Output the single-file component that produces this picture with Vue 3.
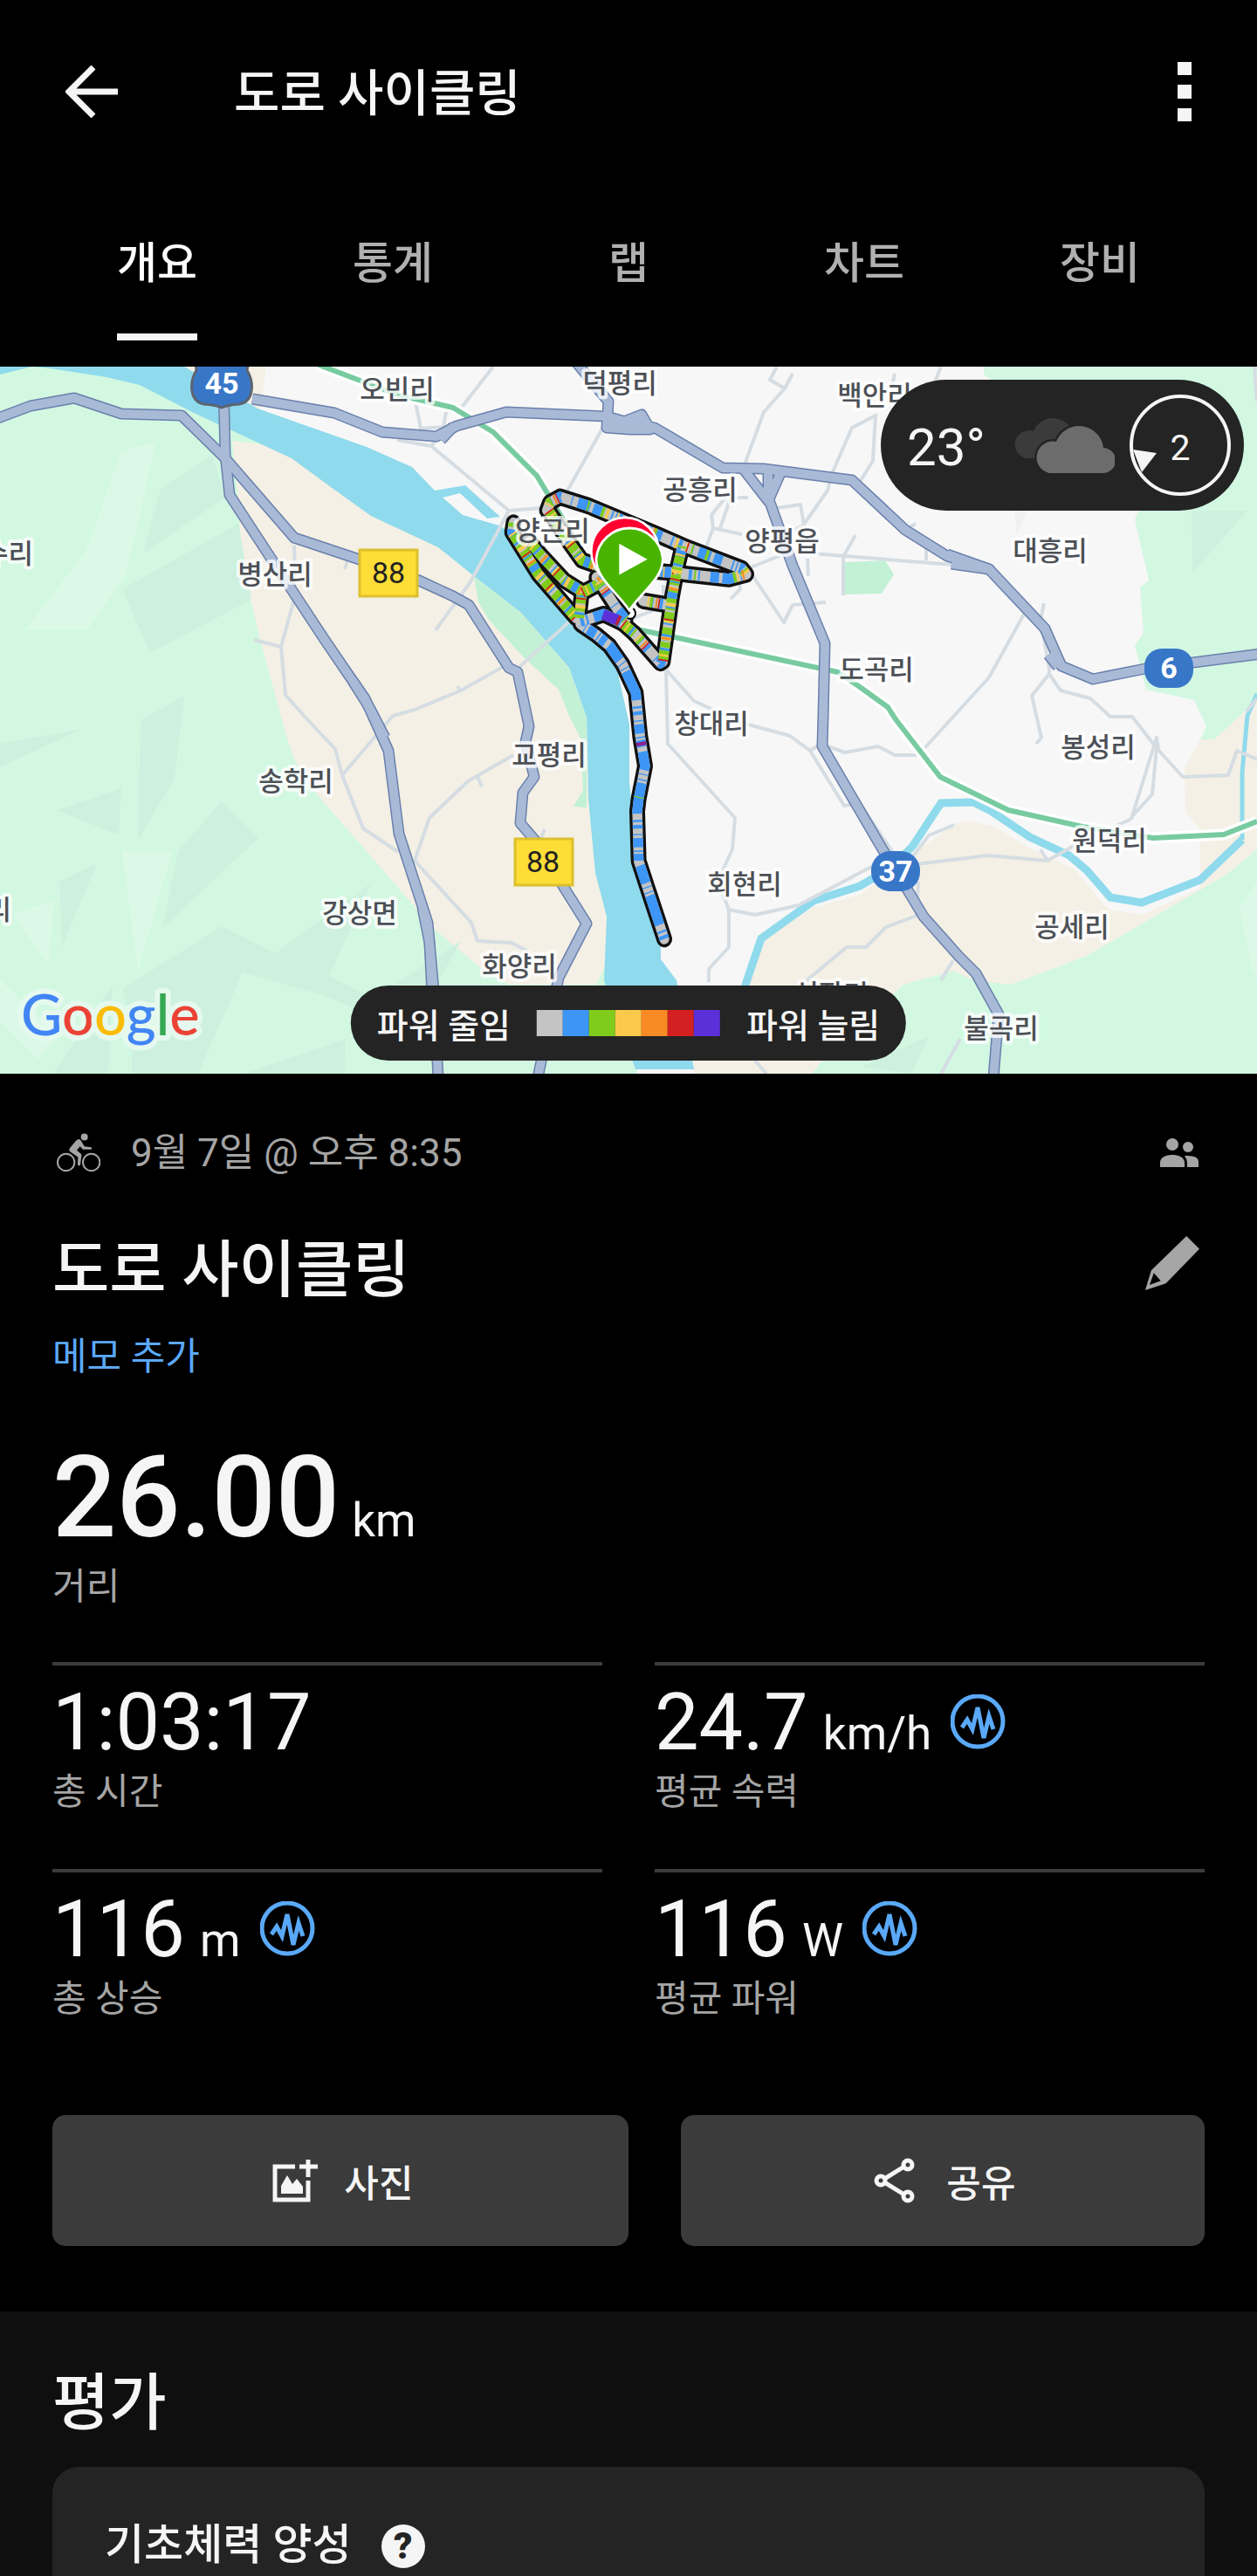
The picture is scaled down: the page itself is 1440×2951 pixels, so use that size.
<template>
  <div class="page">
    <header class="toolbar">
      <button class="icon-btn" type="button" aria-label="뒤로">
        <svg class="back-icon" viewBox="0 0 60 60">
          <path d="M32 2 4 30l28 28M6 30h54" />
        </svg>
      </button>
      <h1 class="toolbar-title">도로 사이클링</h1>
      <button class="icon-btn" type="button" aria-label="더보기">
        <svg class="more-icon" viewBox="0 0 16 68">
          <path d="M0 0h16v15H0zM0 26h16v16H0zM0 53h16v15H0z" />
        </svg>
      </button>
    </header>

    <nav class="tabs">
      <button
        class="tab"
        :class="activeTab === tab ? 'active' : ''"
        type="button"
        v-for="tab in tabs"
        :key="tab"
        @click="activeTab = tab"
      >
        <span class="tab-label">{{ tab }}</span>
      </button>
    </nav>

    <div class="map">
      <svg class="map-canvas" viewBox="0 0 1440 810">
        <rect class="land" width="1440" height="810" />

        <!-- Terrain -->
        <path class="wood" d="M0 0h213L300 80 700 400l30 410H0z" />
        <path class="wood" d="M1126 0l2 10 60 40 117 115-5 10 16 70-10 8 4 52-10 15 13 50 55 12 14 30-7 15 16 2 21-21 16-15 12-8V0z" />
        <path
          class="sand"
          d="M213 0h92l-7 50zM266 85l6 55 3 50 12 77 13 53 27 100 10 30 26 40 135 155 54 45 31 18h100l20-41-3-82-20-80V400L570 230 400 100z"
        />
        <path
          class="sand"
          d="M1375 427h16l37-34 12-8v168l-35 29-160 93-87 33-43-5-23-11-57 16-93 87-12 15H795l-5-15 65-87 20-50 55-38 55-15 50-40 60-42 15-3 30 7 40 25 50 23 40 47 40 6 65-31V530l-17-19-1-51z"
        />
        <path class="wood" d="m1440 553-35 29-160 93-87 33-43-5-23-11-57 16-93 87-12 15h510z" />
        <path class="facet-light" d="M139 97l40-11-35 154-44 61H30l69-91zM140 555h57l-39 138zM14 627l47-15-5 74zM0 703l69 64-25 26-44-43zM1440 590l-20 30 14 70 6 10z" />
        <path
          class="facet-dark"
          d="M243 102l15 48-93 63 19-73zM273 180l15 87-116 61-32-73zM211 377l-50 28-3 138 42-71zM0 432l94-17L0 459zM65 508l74-25-3 54zM204 555l50-57 42 42-110 104zM68 590l43-21-40 96zM140 713l114-72 61 31 110-80-48 106 43 22 20 30-70-30-92-26-51 116h-76l-1-65zM280 810l116-40-1 40zM452 708l76-50-28 50zM61 810l68-102-5 102zM1365 165h64l-63 71zM987 802l77-35-20 43z"
        />
        <path class="facet-grey" d="M1162 165h14l-11 28z" />

        <!-- River -->
        <path
          class="water"
          d="M0 0h211l84 48 125 44 52 23 26 27 35-6 40 36-15 2-31-29-20 5 23 20 45 13 15 17 60 70 55 68 16 72v65l6 65 26 105 4 17v17l18 24 20 102h-67l-36-102 3-73-13-50-8-85-2-98V402l-20-57-55-63-54-42-41-33-77-36-46-33-45-33-114-53-60-31-38-9-65-10-20-2-50 12L0 62z"
        />
        <path class="park" d="M543 240l54 42 55 63 20 57v103l-15-1 11-19-3-60-13-25-12-30-40-37-40-43-12-20zM968 224l46-2 10 16-14 22-42 1z" />
        <path class="creek" d="M850 720l22-65 60-43 53-17 35-20 25-25 33-50 37-1 20 10 45 30 45 21 20 17 27 31 36 6 67-26 48-46" />
        <path class="creek thin" d="M1423 542v-77l6-65 11-25" />

        <!-- Roads -->
        <path class="street" v-for="d in streets" :key="d" :d="d" />
        <path class="rail-casing" :d="rail" />
        <path class="rail" :d="rail" />
        <path class="road-casing" v-for="d in roads" :key="'c' + d" :d="d" />
        <path class="road" v-for="d in roads" :key="'f' + d" :d="d" />

        <!-- Place names under the track -->
        <text
          class="place"
          :class="place.anchor"
          v-for="place in places"
          :key="place.name + place.y"
          :x="place.x"
          :y="place.y"
        >
          {{ place.name }}
        </text>

        <!-- Ride coloured by power -->
        <g transform="translate(540 120) scale(0.3333 0.3571)">
          <path class="track-casing" v-for="t in tracks" :key="'c' + t.d" :d="t.d" />
          <path class="track base" v-for="t in tracks" :key="'b' + t.d" :d="t.d" />
          <template v-for="t in tracks" :key="'l' + t.d">
            <path
              class="track"
              v-for="layer in bands[t.kind]"
              :key="layer.color"
              :d="t.d"
              :stroke-dasharray="layer.dash"
              :style="{ stroke: layer.color }"
            />
          </template>
          <path class="track" d="M452 459l50 18" style="stroke: #5b30d8" />
          <path class="track" d="M500 476l10 5" style="stroke: #b3263c" />
          <path class="track" d="M585 880l-2-12" style="stroke: #8b2390" />
          <path class="start-dot" d="M556 440a18 18 0 1 1-20 30" />
          <path class="pin end" d="M527 420C470 354 412 320 412 256a116 108 0 0 1 232 0c0 58-60 98-117 164z" />
          <path class="pin start" d="M543 446C500 385 429 345 429 280a115 108 0 0 1 229 0c0 65-72 105-115 166z" />
          <path class="pin-play" d="M508 232v100l97-50z" />
        </g>
        <text class="place" x="633" y="199">양근리</text>

        <!-- Road shields -->
        <path class="shield us" d="M224-6h61l-2 10q7 12 5 24-2 13-14 15-14 1-20 4-6-3-20-4-12-2-14-15-2-12 5-24z" />
        <text class="shield-text" x="254" y="31">45</text>
        <rect class="shield local" x="412" y="210" width="66" height="53" />
        <text class="shield-text dark" x="445" y="248">88</text>
        <rect class="shield local" x="590" y="541" width="66" height="53" />
        <text class="shield-text dark" x="622" y="579">88</text>
        <rect class="shield national" x="998" y="555" width="56" height="46" rx="22" />
        <text class="shield-text" x="1026" y="590">37</text>
        <rect class="shield national" x="1311" y="323" width="56" height="45" rx="20" />
        <text class="shield-text" x="1339" y="357">6</text>

        <text class="google" x="24" y="766">
          <tspan class="g-blue">G</tspan><tspan class="g-red">o</tspan><tspan class="g-yellow">o</tspan><tspan class="g-blue">g</tspan><tspan class="g-green">l</tspan><tspan class="g-red">e</tspan>
        </text>
      </svg>

      <div class="weather">
        <span class="temperature">23°</span>
        <svg class="clouds" viewBox="0 0 116 64">
          <path class="cloud-back" d="M16 47a16 16 0 1 1 7-31 24 24 0 0 1 44-1v32z" />
          <path
            class="cloud-front"
            d="M41 64a18 18 0 1 1 8-36 28 28 0 0 1 54 7 14 14 0 0 1-1 29z"
          />
        </svg>
        <svg class="wind" viewBox="0 0 116 116">
          <circle cx="58" cy="58" r="56" />
          <path d="M4 63l27 4-17 22z" />
          <text x="58" y="75">2</text>
        </svg>
      </div>

      <div class="legend">
        <span>파워 줄임</span>
        <div class="swatches">
          <i
            class="swatch"
            v-for="color in powerColors"
            :key="color"
            :style="{ background: color }"
          ></i>
        </div>
        <span>파워 늘림</span>
      </div>
    </div>

    <main class="summary">
      <div class="meta">
        <svg class="bike-icon" viewBox="45 51 150 134">
          <g class="wheels">
            <circle cx="77" cy="151" r="29" />
            <circle cx="164" cy="151" r="29" />
          </g>
          <circle cx="140" cy="64" r="12" />
          <path d="M118 72q6-2 10 4l12 20 22 3q4 1 4 4 0 4-4 4h-27l-10-11-11 14 14 12q3 3 2 7l-4 30q-1 4-5 4-4-1-4-5l1-25-26-18q-7-6-2-13l22-26z" />
        </svg>
        <span class="date">9월 7일 @ 오후 8:35</span>
        <svg class="people-icon" viewBox="0 0 44 33">
          <circle cx="14" cy="7" r="7" />
          <circle cx="32" cy="10" r="6" />
          <path d="M0 33v-5c0-7 8-9 14-9s14 2 14 9v5zM31 33v-5q0-4-3-8 16-1 16 7v6z" />
        </svg>
      </div>

      <div class="title-row">
        <h2 class="title">도로 사이클링</h2>
        <button class="icon-btn edit" type="button" aria-label="이름 편집">
          <svg class="pencil-icon" viewBox="0 0 63 63">
            <path d="M48 0l15 15-39 40-24 8 7-23zM10 43l-5 14 13-5z" fill-rule="evenodd" />
          </svg>
        </button>
      </div>
      <a class="note-link" href="#">메모 추가</a>

      <div class="distance">
        <p class="distance-value">26.00 <span class="unit">km</span></p>
        <p class="label">거리</p>
      </div>

      <div class="stats">
        <div class="stat" v-for="stat in stats" :key="stat.label">
          <p class="stat-value">
            {{ stat.value }} <span class="unit" v-if="stat.unit">{{ stat.unit }}</span>
            <svg class="pulse-icon" viewBox="0 0 63 63" v-if="stat.chart">
              <circle cx="31" cy="31" r="29" />
              <path d="M13 38l6-9 6 11 6-25 7 35 6-25 5 15" />
            </svg>
          </p>
          <p class="label">{{ stat.label }}</p>
        </div>
      </div>

      <div class="actions">
        <button class="action photo" type="button">
          <svg class="action-icon" viewBox="0 0 54 54">
            <path class="line" d="M28 11H5v38h38V27" />
            <path class="line" d="M43 3v20M33 11h21" />
            <path d="M12 42v-9l7-12 6 10 5-6 7 9v8z" />
          </svg>
          사진
        </button>
        <button class="action share" type="button">
          <svg class="action-icon" viewBox="0 0 54 54">
            <path class="line" d="M39 9 10 27l29 18" />
            <circle class="node" cx="40" cy="9" r="5" />
            <circle class="node" cx="9" cy="27" r="5" />
            <circle class="node" cx="40" cy="45" r="5" />
          </svg>
          공유
        </button>
      </div>
    </main>

    <section class="evaluation">
      <h2 class="section-title">평가</h2>
      <div class="card">
        <h3 class="card-title">기초체력 양성</h3>
        <button class="icon-btn help" type="button" aria-label="도움말">?</button>
      </div>
    </section>
  </div>
</template>

<script setup>
import { ref } from "vue";

const tabs = ["개요", "통계", "랩", "차트", "장비"];
const activeTab = ref("개요");

const powerColors = [
  "#c4c4c4",
  "#3d96f5",
  "#80cc1c",
  "#fac94b",
  "#f98a24",
  "#d42020",
  "#5b30d8",
];
const [, blue, green, yellow, orange, red] = powerColors;

const stats = [
  { value: "1:03:17", unit: "", label: "총 시간", chart: false },
  { value: "24.7", unit: "km/h", label: "평균 속력", chart: true },
  { value: "116", unit: "m", label: "총 상승", chart: true },
  { value: "116", unit: "W", label: "평균 파워", chart: true },
];

const places = [
  { name: "오빈리", x: 455, y: 37 },
  { name: "덕평리", x: 710, y: 30 },
  { name: "백안리", x: 1002, y: 44 },
  { name: "공흥리", x: 802, y: 152 },
  { name: "양평읍", x: 896, y: 211 },
  { name: "대흥리", x: 1203, y: 222 },
  { name: "도곡리", x: 1004, y: 358 },
  { name: "창대리", x: 815, y: 420 },
  { name: "봉성리", x: 1258, y: 447 },
  { name: "원덕리", x: 1271, y: 554 },
  { name: "회현리", x: 853, y: 604 },
  { name: "공세리", x: 1228, y: 653 },
  { name: "석장리", x: 952, y: 730 },
  { name: "불곡리", x: 1147, y: 769 },
  { name: "교평리", x: 629, y: 456 },
  { name: "송학리", x: 339, y: 486 },
  { name: "강상면", x: 412, y: 637 },
  { name: "화양리", x: 595, y: 698 },
  { name: "병산리", x: 315, y: 249 },
  { name: "수리", x: 38, y: 225, anchor: "end" },
  { name: "리", x: 13, y: 633, anchor: "end" },
];

const rail =
  "M365-2L455 32 519 47 565 75 615 125 645 175 690 250 725 300 773 310 960 350 985 367 1017 390 1026 404 1077 470 1155 508 1240 527 1321 540 1402 536 1440 521";

const roads = [
  "M-5 60L35 45 85 36 139 54 208 56 258 105 337 196 415 222 480 245 519 263 537 273 583 345 593 350 606 412 602 430 612 470 599 488 596 523 615 545 645 595 672 638 640 700 616 815",
  "M256 20L258 100 263 147 314 225 372 313 402 357 418 380 436 420 445 440 457 535 490 637 497 715 502 815",
  "M404 360L424 392 441 425M484 620L492 660 499 795",
  "M289 37L383 53 438 75 500 80 523 68 580 52 695 57 720 64 750 70 828 116 875 117 976 130 1037 187 1085 217 1133 232 1197 300 1216 343 1252 358 1312 346 1445 329",
  "M660-5L697 40 695 70 722 72M505 84L520 68M695 57L720 72 745 72 735 55 712 64",
  "M852 118L880 154 895 120M880 114L880 150 908 228 945 317 943 400 942 435 1011 553 1040 600 1058 630 1098 675 1118 695 1144 742 1138 815",
  "M1090 226L1133 232 1085 215M1201 330L1212 344",
];

const streets = [
  "M476 40L482 71 508 69 511 52M565 0L530 45 511 52M455 84L494 91 583 165 618 162M494 91L505 78M695 62L640 160 632 148 595 110M583 165L540 245 499 302",
  "M337 205L338 240 336 270 322 321 291 313M322 321L327 376 350 402 384 438 392 468 416 529 456 556M392 468L450 400 475 393 528 371 576 344 594 345 660 285M524 366L528 373",
  "M588 445L536 475 492 517 475 566 540 637 547 658 586 660 605 670M547 470L552 481M624 530L616 550M395 232L398 222M474 258L476 265",
  "M890 0L882 15 899 25 908 8M899 25L875 52 852 115M1005 55L976 70 952 125 948 142 920 182M1003 55L1000 108 983 135M1078 0L1070 20M1025 8L1022 22",
  "M835 145L815 170 817 185 850 192M817 185L807 212M857 150L837 150 825 185M890 162L917 158 921 181 896 196M855 232L905 212 1092 227M966 262L966 218 980 193M1061 202L1061 222M925 220L926 240M1049 180L1040 185",
  "M860 236L898 293 908 273 946 270M846 235L848 255 837 266M725 255L760 240M720 290L760 275 760 250M763 347L795 383 850 408 905 423 928 440 940 432 968 442 1006 435 1025 445 1052 445 1133 356 1175 280",
  "M763 347L765 432 842 517 839 553 822 590 835 622 865 628 915 617 1000 572M835 622L835 665 812 690 812 705M928 440L967 503 978 501M990 508L1032 570M1050 570L1132 560 1200 566 1228 550 1296 518 1325 425 1327 438M1192 553L1200 566",
  "M1077 812L1100 770M1196 271L1192 290 1202 345 1202 352 1182 377 1193 425 1187 432M1202 352L1215 371 1249 380 1272 401 1297 401 1325 437 1355 470 1407 468 1417 440 1440 450M1325 437L1320 490 1296 516",
  "M1052 590L1050 629 1015 642 992 665 970 665 923 704M1092 680L1078 703M1093 525L1064 537 1045 562M865 795L878 810M1437 0L1440 40M1440 380L1428 395",
];

const tracks = [
  {
    kind: "river",
    d: "M663 1500L610 1350 575 1250 570 1090 575 1050 597 945 580 850 565 710 520 620 475 560 430 525 375 490",
  },
  { kind: "river", d: "M375 482L455 458 520 487" },
  { kind: "city", d: "M360 470L230 330 140 195 145 165" },
  { kind: "city", d: "M200 225L240 270 320 350 380 385 370 470" },
  { kind: "city", d: "M380 390L430 365 480 320" },
  { kind: "mixed", d: "M260 125L270 100 305 82 400 110 620 195 730 240 930 312 945 330 885 345 740 330 700 325 650 322" },
  { kind: "city", d: "M265 125L330 220 380 285 440 305" },
  { kind: "mixed", d: "M430 340L500 440 530 475" },
  { kind: "city", d: "M520 487L560 520" },
  { kind: "mixed", d: "M560 520L650 615 660 590" },
  { kind: "city", d: "M658 610L690 400 710 300 725 240" },
  { kind: "mixed", d: "M590 415L685 430" },
];

// Dash patterns laid over the grey track, one set per stretch of the ride
const bands = {
  river: [
    { color: blue, dash: "12 9 7 20 100 8 4 14 4 12 60 16 22 6 5 10 30 9 4 17" },
    { color: green, dash: "0 468 4 260" },
  ],
  mixed: [
    { color: blue, dash: "0 30 6 9 5 7 12 38 4 19 44 12 30 6" },
    { color: green, dash: "0 24 10 130 6 22" },
    { color: yellow, dash: "0 16 5 212 9 14" },
    { color: orange, dash: "0 44 6 310" },
    { color: red, dash: "0 53 5 420" },
  ],
  city: [
    { color: green, dash: "0 4 34 7 18 5 42 12" },
    { color: blue, dash: "0 36 8 24 20 31 5 13" },
    { color: yellow, dash: "0 17 6 46 11 29" },
    { color: orange, dash: "0 71 7 83" },
    { color: red, dash: "0 2 5 124" },
  ],
};
</script>

<style>
body {
  margin: 0;
  background: #000;
}
</style>

<style scoped>
.page {
  display: flex;
  flex-direction: column;
  min-height: 100vh;
  color: #f5f5f5;
  background: #000;
  font-family: Roboto, "Noto Sans CJK KR", sans-serif;
  overflow: hidden;
}

h1,
h2,
h3,
p {
  margin: 0;
  font-weight: 500;
}

button {
  padding: 0;
  border: none;
  background: none;
  color: inherit;
  font: inherit;
  cursor: pointer;
}

.icon-btn {
  display: flex;
}

.toolbar {
  display: flex;
  align-items: center;
  height: 210px;
  padding: 0 75px;
}

.back-icon {
  width: 60px;
  height: 60px;
  fill: none;
  stroke: #f5f5f5;
  stroke-width: 7;
}

.toolbar-title {
  flex-grow: 1;
  padding: 6px 0 0 133px;
  font-size: 57px;
  line-height: 72px;
}

.more-icon {
  width: 16px;
  height: 68px;
  fill: #f5f5f5;
}

.tabs {
  display: flex;
  height: 210px;
  padding: 0 45px;
}

.tab {
  display: flex;
  flex: 1;
  justify-content: center;
  height: 180px;
  color: #b0b0b0;
  font-size: 50px;
  font-weight: 500;
  line-height: 184px;
}

.tab-label {
  box-sizing: border-box;
  height: 180px;
}

.tab.active {
  color: #fff;
}

.tab.active .tab-label {
  border-bottom: 8px solid #f5f5f5;
}

/* Map */
.map {
  position: relative;
}

.map-canvas {
  display: block;
  width: 100%;
}

.land {
  fill: #f7f7f7;
}

.wood {
  fill: #d2f8e2;
}

.sand {
  fill: #f4f0e5;
}

.facet-light {
  fill: #dcf9e8;
}

.facet-dark {
  fill: #cdf1de;
}

.facet-grey {
  fill: #f0f0f0;
}

.water {
  fill: #8fdaec;
}

.park {
  fill: #c3f1d5;
}

.creek {
  fill: none;
  stroke: #8fdaec;
  stroke-width: 9;
}

.creek.thin {
  stroke-width: 5;
}

.street,
.rail,
.rail-casing,
.road,
.road-casing {
  fill: none;
  stroke-linejoin: round;
}

.street {
  stroke: #d5dde3;
  stroke-width: 4;
}

.rail-casing {
  stroke: #fff;
  stroke-width: 13;
}

.rail {
  stroke: #78cba0;
  stroke-width: 6;
}

.road-casing {
  stroke: #6a80ac;
  stroke-width: 13;
}

.road {
  stroke: #a9bad7;
  stroke-width: 10;
}

.place {
  fill: #4c5056;
  stroke: rgba(255, 255, 255, 0.8);
  stroke-width: 8;
  stroke-linejoin: round;
  paint-order: stroke;
  font-family: "Noto Sans CJK KR", sans-serif;
  font-size: 31px;
  font-weight: 500;
  text-anchor: middle;
}

.place.end {
  text-anchor: end;
}

.track,
.track-casing {
  fill: none;
  stroke-linejoin: round;
}

.track-casing {
  stroke: #111;
  stroke-width: 54;
  stroke-linecap: round;
}

.track {
  stroke: #c4c4c4;
  stroke-width: 34;
}

.track.base {
  stroke-linecap: round;
}

.start-dot {
  fill: #fff;
  stroke: #000;
  stroke-width: 6;
}

.pin {
  stroke: #fff;
  stroke-width: 8;
}

.pin.end {
  fill: #ff0030;
}

.pin.start {
  fill: #48b400;
}

.pin-play {
  fill: #fff;
}

.shield {
  fill: #3877c8;
}

.shield.us {
  stroke: #5c6470;
  stroke-width: 3;
}

.shield.local {
  fill: #ffdd37;
  stroke: #dcc02d;
  stroke-width: 3;
}

.shield-text {
  fill: #fff;
  font-size: 34px;
  font-weight: 700;
  text-anchor: middle;
}

.shield-text.dark {
  fill: #222;
  font-weight: 400;
}

.google {
  font-family: Lato, sans-serif;
  font-size: 65px;
  font-weight: 500;
  stroke: #e6f9ee;
  stroke-width: 12;
  stroke-linejoin: round;
  paint-order: stroke;
}

.g-blue {
  fill: #4285f4;
}

.g-red {
  fill: #ea4335;
}

.g-yellow {
  fill: #fbbc05;
}

.g-green {
  fill: #34a853;
}

.weather {
  position: absolute;
  top: 15px;
  right: 15px;
  box-sizing: border-box;
  display: flex;
  align-items: center;
  height: 150px;
  padding: 0 15px 0 30px;
  border-radius: 75px;
  background: #242424;
}

.temperature {
  width: 122px;
  padding-top: 4px;
  font-size: 60px;
}

.clouds {
  width: 116px;
  height: 64px;
  margin-right: 17px;
}

.cloud-back {
  fill: #3b3b3b;
}

.cloud-front {
  fill: #6c6c6c;
  stroke: #242424;
  stroke-width: 5;
  paint-order: stroke;
}

.wind {
  width: 116px;
  height: 116px;
  fill: #f5f5f5;
}

.wind circle {
  fill: none;
  stroke: #f5f5f5;
  stroke-width: 4;
}

.wind text {
  font-size: 41px;
  text-anchor: middle;
}

.legend {
  position: absolute;
  bottom: 15px;
  left: 50%;
  translate: -50% 0;
  display: flex;
  align-items: center;
  gap: 30px;
  height: 86px;
  padding: 0 30px;
  border-radius: 43px;
  background: #242424;
  font-size: 39px;
  font-weight: 500;
  white-space: nowrap;
}

.swatches {
  display: flex;
}

.swatch {
  width: 30px;
  height: 30px;
}

/* Summary */
.summary {
  padding: 60px 60px 75px;
}

.meta {
  display: flex;
  align-items: center;
  height: 60px;
  padding: 0 7px 0 5px;
  color: #a5a5a5;
}

.bike-icon {
  width: 50px;
  height: 45px;
  fill: #a5a5a5;
}

.wheels {
  fill: none;
  stroke: #a5a5a5;
  stroke-width: 6;
}

.date {
  flex-grow: 1;
  padding: 2px 0 0 35px;
  font-size: 44px;
  line-height: 60px;
}

.people-icon {
  width: 44px;
  height: 33px;
  fill: #a5a5a5;
}

.title-row {
  display: flex;
  align-items: flex-start;
  justify-content: space-between;
  padding: 60px 6px 0 0;
}

.title {
  font-size: 71px;
  line-height: 90px;
}

.edit {
  padding-top: 6px;
}

.pencil-icon {
  width: 62px;
  height: 62px;
  fill: #a5a5a5;
}

.note-link {
  display: inline-block;
  margin-top: 24px;
  color: #5aa9f8;
  font-size: 43px;
  line-height: 60px;
  text-decoration: none;
}

.distance {
  padding-top: 60px;
}

.distance-value {
  font-size: 129px;
  line-height: 144px;
}

.unit {
  margin-left: -5px;
  font-size: 53px;
  font-weight: 400;
  line-height: 1;
}

.distance-value .unit {
  margin-left: -18px;
}

.label {
  color: #a5a5a5;
  font-size: 42px;
  font-weight: 400;
  line-height: 60px;
}

.stats {
  display: grid;
  grid-template-columns: 1fr 1fr;
  gap: 58px 60px;
  padding-top: 56px;
}

.stat {
  border-top: 4px solid #3c3c3c;
}

.stat-value {
  padding-top: 17px;
  font-size: 90px;
  font-weight: 400;
  line-height: 98px;
}

.pulse-icon {
  width: 63px;
  height: 63px;
  margin-left: 22px;
  fill: none;
  stroke: #5aa9f8;
  stroke-width: 5;
}

.actions {
  display: flex;
  gap: 60px;
  padding-top: 103px;
}

.action {
  display: flex;
  align-items: center;
  justify-content: center;
  gap: 30px;
  height: 150px;
  padding-left: 4px;
  border-radius: 15px;
  background: #3b3b3b;
  font-size: 43px;
  font-weight: 500;
}

.photo {
  flex: 11;
}

.share {
  flex: 10;
}

.action-icon {
  width: 54px;
  height: 54px;
  fill: #f5f5f5;
}

.line,
.node {
  fill: none;
  stroke: #f5f5f5;
  stroke-width: 5;
}

.node {
  fill: #3b3b3b;
}

.evaluation {
  display: flex;
  flex: 1;
  flex-direction: column;
  padding: 60px 60px 0;
  background: #0f0f0f;
}

.section-title {
  padding-bottom: 28px;
  font-size: 71px;
  line-height: 90px;
}

.card {
  display: flex;
  flex: 1;
  align-items: flex-start;
  gap: 34px;
  padding: 60px 60px 0;
  border-radius: 30px 30px 0 0;
  background: #242424;
}

.card-title {
  font-size: 49px;
  line-height: 60px;
}

.help {
  justify-content: center;
  width: 50px;
  height: 50px;
  margin-top: 6px;
  border-radius: 50%;
  background: #f5f5f5;
  color: #242424;
  font-size: 42px;
  font-weight: 900;
  line-height: 50px;
}
</style>
